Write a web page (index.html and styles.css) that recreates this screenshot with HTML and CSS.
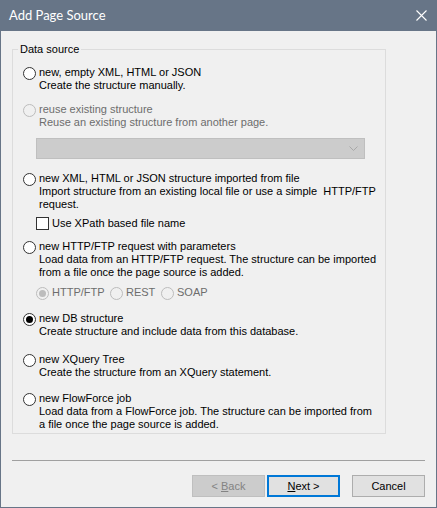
FILE: index.html
```html
<!DOCTYPE html>
<html>
<head>
<meta charset="utf-8">
<link rel="stylesheet" href="styles.css">
</head>
<body>
<div class="window">
  <div class="titlebar">
    <span class="title">Add Page Source</span>
    <svg class="close" width="11" height="11" viewBox="0 0 11 11"><path d="M0.5 0.5 L10.5 10.5 M10.5 0.5 L0.5 10.5" stroke="#fff" stroke-width="1.1" fill="none"/></svg>
  </div>
  <div class="content">
    <fieldset class="group">
      <legend class="legend">Data source</legend>
      <div class="opt">
        <span class="radio"></span>
        <div class="label"><div>new, empty XML, HTML or JSON</div><div>Create the structure manually.</div></div>
      </div>
      <div class="opt opt-r2 disabled">
        <span class="radio"></span>
        <div class="label"><div>reuse existing structure</div><div>Reuse an existing structure from another page.</div></div>
      </div>
      <div class="combo">
        <svg class="chev" width="9" height="5" viewBox="0 0 9 5"><path d="M0.5 0.5 L4.5 4.5 L8.5 0.5" stroke="#a8a8a8" fill="none"/></svg>
      </div>
      <div class="opt opt-r3">
        <span class="radio"></span>
        <div class="label"><div>new XML, HTML or JSON structure imported from file</div><div>Import structure from an existing local file or use a simple&nbsp; HTTP/FTP</div><div>request.</div></div>
      </div>
      <div class="check-row">
        <span class="checkbox"></span>
        <span class="check-label">Use XPath based file name</span>
      </div>
      <div class="opt opt-r4">
        <span class="radio"></span>
        <div class="label"><div>new HTTP/FTP request with parameters</div><div>Load data from an HTTP/FTP request. The structure can be imported</div><div>from a file once the page source is added.</div></div>
      </div>
      <div class="subopts disabled">
        <span class="subopt sub-http"><span class="radio checked"></span><span class="sublabel">HTTP/FTP</span></span>
        <span class="subopt sub-rest"><span class="radio"></span><span class="sublabel">REST</span></span>
        <span class="subopt"><span class="radio"></span><span class="sublabel">SOAP</span></span>
      </div>
      <div class="opt opt-r5">
        <span class="radio checked"></span>
        <div class="label"><div>new DB structure</div><div>Create structure and include data from this database.</div></div>
      </div>
      <div class="opt opt-r6">
        <span class="radio"></span>
        <div class="label"><div>new XQuery Tree</div><div>Create the structure from an XQuery statement.</div></div>
      </div>
      <div class="opt opt-r7">
        <span class="radio"></span>
        <div class="label"><div>new FlowForce job</div><div>Load data from a FlowForce job. The structure can be imported from</div><div>a file once the page source is added.</div></div>
      </div>
    </fieldset>
    <div class="sep"></div>
    <div class="buttons">
      <button class="btn btn-disabled">&lt; <u>B</u>ack</button>
      <button class="btn btn-default"><u>N</u>ext &gt;</button>
      <button class="btn btn-cancel">Cancel</button>
    </div>
  </div>
</div>
</body>
</html>
```
FILE: styles.css
```css
html, body {
  margin: 0;
  padding: 0;
  background: #f0f0f0;
}
.window {
  width: 437px;
  height: 508px;
  box-sizing: border-box;
  border: 1px solid #677587;
  border-top: none;
  background: #f0f0f0;
  font-family: "Liberation Sans", Arial, sans-serif;
  font-size: 11px;
  line-height: 13px;
  color: #000;
}
.titlebar {
  height: 31px;
  margin: 0 -1px;
  background: #677587;
  display: flex;
  align-items: center;
  justify-content: space-between;
  padding: 0 10px 0 9px;
}
.title {
  color: #fff;
  font-family: Lato, "Open Sans", sans-serif;
  font-size: 13px;
  line-height: 20px;
  margin-top: -1px;
}
.close {
  display: block;
  margin-top: -1px;
}
.content {
  padding: 0 11px;
}
.group {
  margin: 12px 0 0 0;
  padding: 10px 0 2px 10px;
  border: 1px solid #dcdcdc;
  width: 374px;
  box-sizing: border-box;
  min-width: 0;
}
.legend {
  padding: 0 2px;
  margin-left: -5px;
  line-height: 13px;
}
.opt {
  display: flex;
  align-items: flex-start;
}
.opt-r2 { margin-top: 11px; }
.opt-r3 { margin-top: 13px; }
.opt-r4 { margin-top: 10px; }
.opt-r5 { margin-top: 12px; }
.opt-r6 { margin-top: 15px; }
.opt-r7 { margin-top: 13px; }
.label {
  margin-left: 3px;
  white-space: nowrap;
}
.radio {
  flex: none;
  display: inline-block;
  width: 13px;
  height: 13px;
  box-sizing: border-box;
  border: 1px solid #333;
  border-radius: 50%;
  background: #fff;
  margin-top: 1px;
  position: relative;
}
.radio.checked::after {
  content: "";
  position: absolute;
  left: 2px;
  top: 2px;
  width: 7px;
  height: 7px;
  border-radius: 50%;
  background: #000;
}
.disabled { color: #6d6d6d; }
.disabled .radio {
  border-color: #bcbcbc;
  background: #f0f0f0;
}
.disabled .radio.checked::after { background: #bcbcbc; }
.combo {
  margin: 9px 0 0 13px;
  width: 329px;
  height: 21px;
  box-sizing: border-box;
  background: #cccccc;
  border: 1px solid #bfbfbf;
  display: flex;
  align-items: center;
  justify-content: flex-end;
  padding-right: 6px;
}
.chev { display: block; }
.check-row {
  margin: 6px 0 0 13px;
  display: flex;
  align-items: flex-start;
}
.checkbox {
  flex: none;
  width: 13px;
  height: 13px;
  box-sizing: border-box;
  border: 1px solid #333;
  background: #fff;
}
.check-label { margin-left: 3px; }
.subopts {
  margin: 7px 0 0 13px;
  display: flex;
}
.subopt {
  display: flex;
  align-items: flex-start;
}
.sub-http { width: 74px; }
.sub-rest { width: 51px; }
.sublabel { margin-left: 3px; }
.sep {
  margin-top: 26px;
  height: 1px;
  background: #a0a0a0;
}
.buttons {
  margin-top: 14px;
  display: flex;
  justify-content: flex-end;
}
.btn {
  width: 73px;
  height: 22px;
  box-sizing: border-box;
  font-family: "Liberation Sans", Arial, sans-serif;
  font-size: 11px;
  padding: 0;
  background: #e1e1e1;
  border: 1px solid #adadad;
  color: #000;
}
.btn-disabled {
  background: #cccccc;
  border-color: #bfbfbf;
  color: #838383;
}
.btn-default {
  margin-left: 2px;
  border: 2px solid #0078d7;
}
.btn-cancel { margin-left: 12px; }
```
